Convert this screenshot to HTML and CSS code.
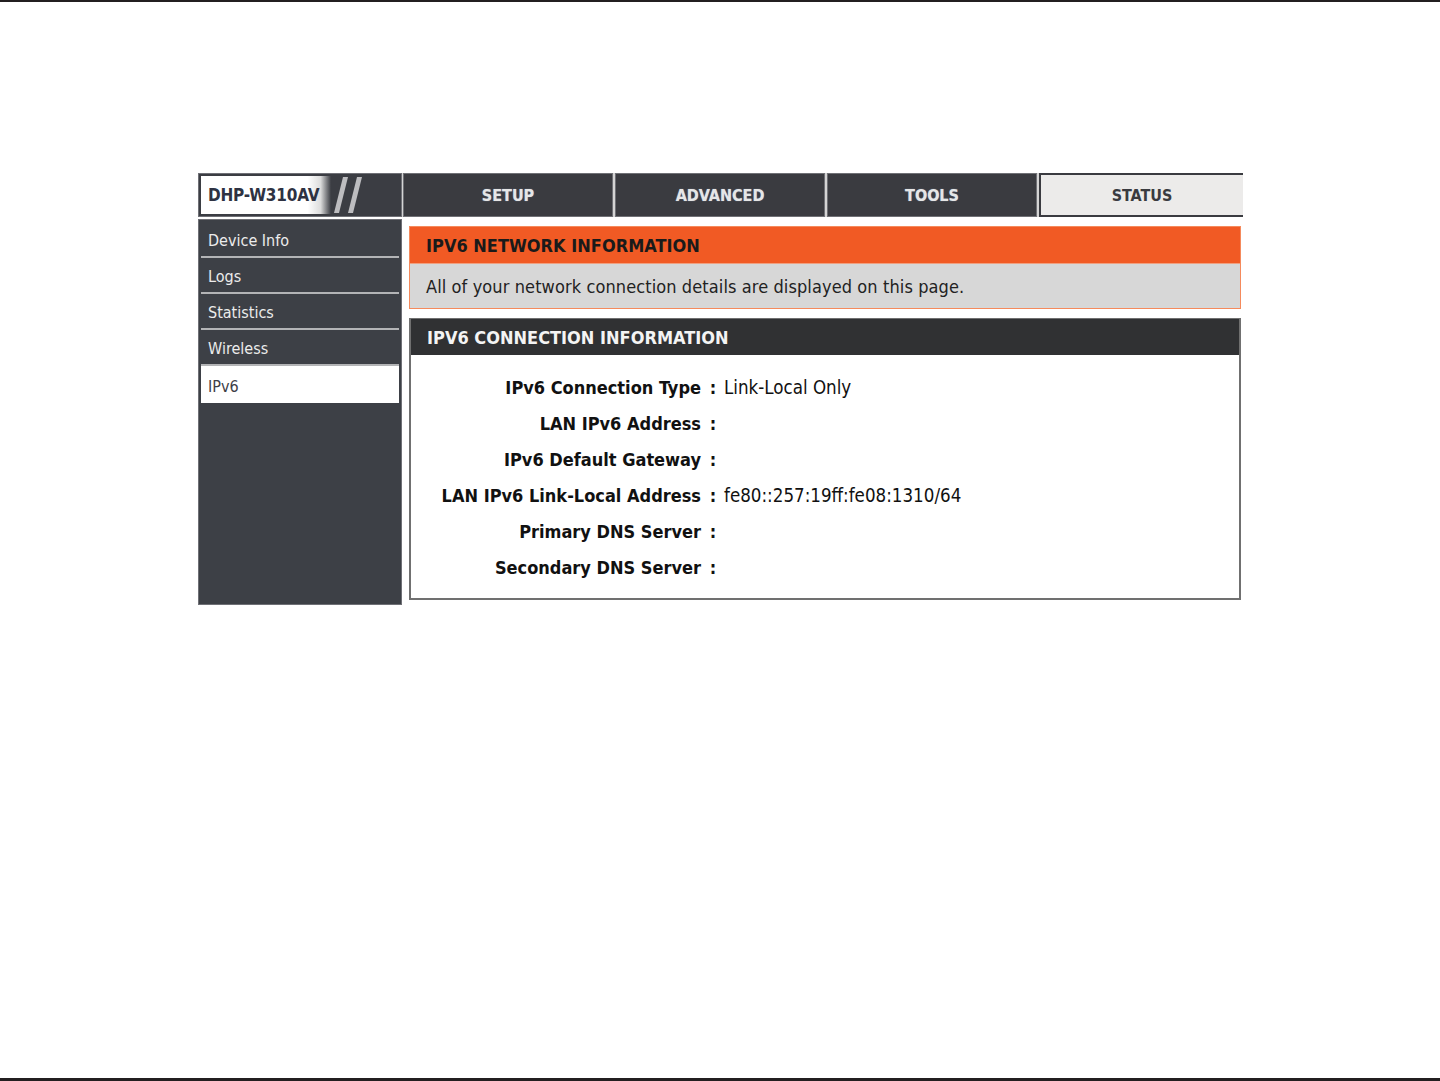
FILE: index.html
```html
<!DOCTYPE html>
<html lang="en">
<head>
    <meta charset="UTF-8">
    <title>DHP-W310AV - Status - IPv6</title>
    <link rel="stylesheet" href="styles.css">
</head>
<body>
    <div class="page">
        <div class="router">
            <div class="topbar">
                <div class="logo">
                    <div class="logo-box">DHP-W310AV</div>
                    <svg class="slashes" width="34" height="38" viewBox="0 0 34 38">
                        <polygon points="3,37 8,37 17,1 12,1" fill="#bdbdc0"/>
                        <polygon points="17,37 22,37 31,1 26,1" fill="#bdbdc0"/>
                    </svg>
                </div>
                <div class="tab">SETUP</div>
                <div class="tab">ADVANCED</div>
                <div class="tab">TOOLS</div>
                <div class="tab active">STATUS</div>
            </div>

            <div class="body">
                <div class="sidebar">
                    <div class="nav-item">Device Info</div>
                    <div class="nav-item">Logs</div>
                    <div class="nav-item">Statistics</div>
                    <div class="nav-item">Wireless</div>
                    <div class="nav-item current">IPv6</div>
                </div>

                <div class="content">
                    <div class="box intro">
                        <h2>IPV6 NETWORK INFORMATION</h2>
                        <p>All of your network connection details are displayed on this page.</p>
                    </div>

                    <div class="box info">
                        <h2>IPV6 CONNECTION INFORMATION</h2>
                        <div class="rows">
                            <div class="label">IPv6 Connection Type</div><div class="colon">:</div><div class="value">Link-Local Only</div>
                            <div class="label">LAN IPv6 Address</div><div class="colon">:</div><div class="value"></div>
                            <div class="label">IPv6 Default Gateway</div><div class="colon">:</div><div class="value"></div>
                            <div class="label">LAN IPv6 Link-Local Address</div><div class="colon">:</div><div class="value">fe80::257:19ff:fe08:1310/64</div>
                            <div class="label">Primary DNS Server</div><div class="colon">:</div><div class="value"></div>
                            <div class="label">Secondary DNS Server</div><div class="colon">:</div><div class="value"></div>
                        </div>
                    </div>
                </div>
            </div>
        </div>
    </div>
</body>
</html>
```

FILE: styles.css
```css
* {
    box-sizing: border-box;
}

body {
    margin: 0;
    padding: 0;
    background-color: #ffffff;
    font-family: 'DejaVu Sans Condensed', 'DejaVu Sans', sans-serif;
}

.page {
    height: 1081px;
    border-top: 2px solid #231f20;
    border-bottom: 3px solid #231f20;
    padding-top: 171px;
}

.router {
    width: 1045px;
    margin-left: 198px;
}

/* top bar */

.topbar {
    display: flex;
    height: 44px;
    gap: 2px;
    background-color: #d4d4d4;
}

.logo {
    width: 204px;
    flex: none;
    background-color: #3b3d43;
    border: 1px solid #6f7076;
    padding: 2px;
    display: flex;
    align-items: stretch;
    margin-right: -1px;
}

.logo-box {
    width: 130px;
    padding-left: 7px;
    display: flex;
    align-items: center;
    background: linear-gradient(to right, #ffffff 82%, #dcdcdc 92%, #3b3d43 100%);
    color: #2e3242;
    font-weight: bold;
    font-size: 17px;
    letter-spacing: -0.2px;
}

.tab {
    width: 210px;
    flex: none;
    background-color: #3a3b40;
    border: 1px solid #707176;
    color: #e6e6e6;
    font-weight: bold;
    font-size: 16px;
    display: flex;
    align-items: center;
    justify-content: center;
    text-shadow: 0 0 1px #8aa0c0;
}

.tab.active {
    width: 204px;
    background-color: #ecebea;
    border: 2px solid #3a3b40;
    border-right: none;
    color: #3a3b40;
    text-shadow: none;
}

/* body */

.body {
    display: flex;
    margin-top: 2px;
    gap: 7px;
    align-items: flex-start;
}

.sidebar {
    width: 204px;
    height: 386px;
    background-color: #3d4046;
    border: 1px solid #6f7076;
    padding: 2px 2px 0;
}

.nav-item {
    height: 36px;
    padding-left: 7px;
    padding-top: 3px;
    display: flex;
    align-items: center;
    color: #ececec;
    font-size: 16px;
    border-bottom: 2px solid #b3b4b6;
}

.nav-item.current {
    background-color: #ffffff;
    color: #3d4046;
    border-bottom: none;
    height: 37px;
}

.content {
    width: 832px;
    padding-top: 7px;
}

.box h2 {
    margin: 0;
    font-size: 18px;
    font-weight: bold;
    padding-left: 16px;
    display: flex;
    align-items: center;
}

.intro {
    border: 1px solid #f58a5c;
}

.intro h2 {
    height: 36px;
    background-color: #f15a24;
    color: #1a1a1a;
}

.intro p {
    margin: 0;
    height: 45px;
    background-color: #d7d7d7;
    border-top: 1px solid #f0a080;
    padding-left: 16px;
    display: flex;
    align-items: center;
    color: #222222;
    font-size: 18px;
    letter-spacing: 0.1px;
}

.info {
    margin-top: 9px;
    border: 2px solid #707070;
    border-top: 1px solid #707070;
    height: 282px;
}

.info h2 {
    height: 36px;
    background-color: #303133;
    color: #f4f4f4;
}

.rows {
    display: grid;
    grid-template-columns: 290px 22px 1fr;
    grid-auto-rows: 36px;
    padding-top: 14px;
    align-items: center;
    font-size: 18px;
    color: #111111;
}

.label {
    text-align: right;
    font-weight: bold;
}

.colon {
    font-weight: bold;
    text-align: center;
    padding-left: 2px;
}

.value {
    padding-left: 1px;
    font-size: 18.6px;
}
```
